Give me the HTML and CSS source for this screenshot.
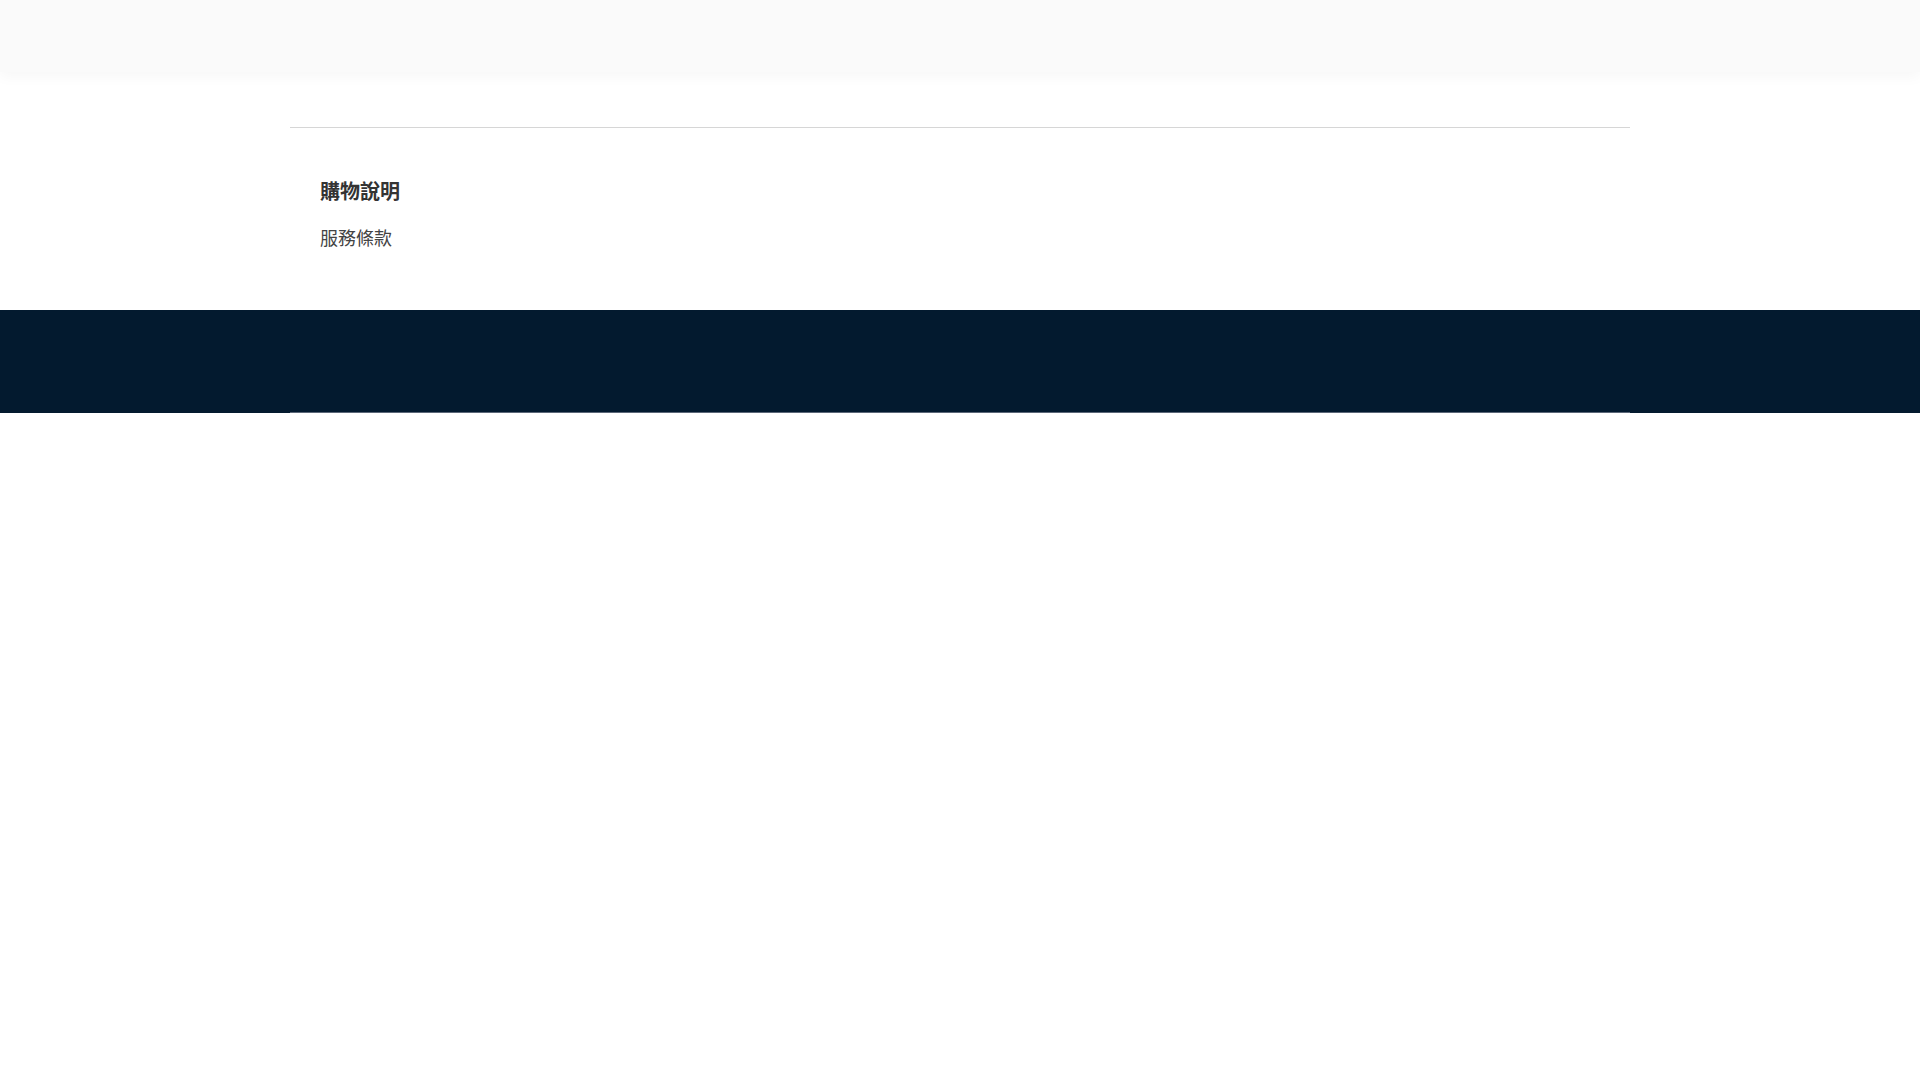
FILE: index.html
```html
<!DOCTYPE html>
<html lang="zh-Hant">
<head>
    <meta charset="UTF-8">
    <meta name="viewport" content="width=device-width, initial-scale=1.0">
    <title>購物說明</title>
    <link rel="stylesheet" href="styles.css">
</head>
<body>
    <header class="site-header"></header>
    <main class="page">
        <div class="container">
            <div class="divider"></div>
            <section class="links">
                <h2 class="links-title">購物說明</h2>
                <a class="links-item" href="#terms">服務條款</a>
            </section>
        </div>
    </main>
    <footer class="site-footer">
        <div class="container footer-inner"></div>
    </footer>
</body>
</html>
```

FILE: styles.css
```css
body {
    margin: 0;
    padding: 0;
    font-family: "Noto Sans CJK TC", "Noto Sans", Arial, sans-serif;
    color: #333;
    background-color: #fff;
}

.site-header {
    height: 72px;
    background-color: #fafafa;
    box-shadow: 0 4px 14px rgba(0, 0, 0, 0.04);
    position: relative;
    z-index: 10;
}

.container {
    width: 1340px;
    margin: 0 auto;
}

.page {
    padding-top: 55px;
}

.divider {
    height: 1px;
    background-color: #d6d6d6;
}

.links {
    padding: 49px 30px 60px;
}

.links-title {
    margin: 0 0 19px;
    font-size: 20px;
    line-height: 28px;
    font-weight: 700;
    color: #333;
}

.links-item {
    display: block;
    font-size: 18px;
    line-height: 26px;
    color: #444;
    text-decoration: none;
}

.site-footer {
    background-color: #031a2f;
}

.footer-inner {
    height: 102px;
    border-bottom: 1px solid #5b6778;
}
```
